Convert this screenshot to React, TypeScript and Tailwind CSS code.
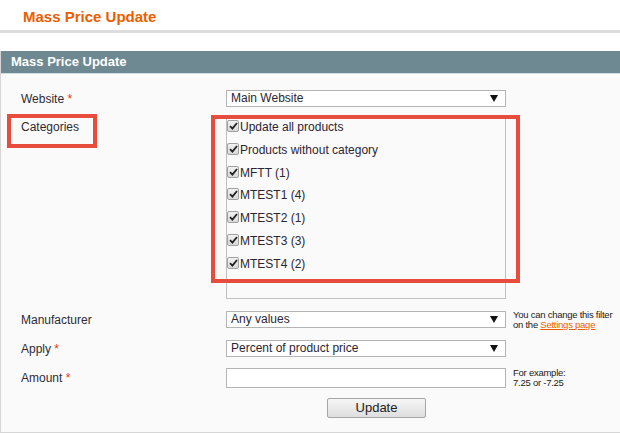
import React from 'react';

const categories = [
  'Update all products',
  'Products without category',
  'MFTT (1)',
  'MTEST1 (4)',
  'MTEST2 (1)',
  'MTEST3 (3)',
  'MTEST4 (2)',
];

function Arrow() {
  return (
    <svg width="8" height="7" viewBox="0 0 8 7" className="shrink-0">
      <path d="M0 0 L8 0 L4 7 Z" fill="#111" />
    </svg>
  );
}

function Select({ value }: { value: string }) {
  return (
    <div className="w-[280px] h-[17px] shrink-0 bg-white border border-[#b4b4b4] flex items-center justify-between pl-[4px] pr-[7px] text-[12px] text-[#2c2532]">
      <span className="leading-[15px]">{value}</span>
      <Arrow />
    </div>
  );
}

function Check() {
  return (
    <span className="mt-[3px] w-[12px] h-[12px] rounded-[2px] border border-[#a0a0a0] bg-gradient-to-b from-[#f2f2f2] to-[#d9d9d9] flex items-center justify-center shrink-0">
      <svg width="9" height="8" viewBox="0 0 9 8">
        <path d="M1 4.2 L3.4 6.6 L8 1" stroke="#222" strokeWidth="1.8" fill="none" />
      </svg>
    </span>
  );
}

function Label({ text, req }: { text: string; req?: boolean }) {
  return (
    <div className="w-[225px] pl-[20px] shrink-0 text-[12px] text-[#2f2b33]">
      {text}
      {req && <span className="text-[#eb340a]"> *</span>}
    </div>
  );
}

function Help({ children }: { children: React.ReactNode }) {
  return (
    <div className="ml-[7px] whitespace-nowrap text-[9.5px] leading-[10px] tracking-[-0.25px] text-[#222]">
      {children}
    </div>
  );
}

export default function App() {
  return (
    <div className="relative w-full h-[433px] bg-white overflow-hidden" style={{ fontFamily: '"Liberation Sans", Arial, sans-serif' }}>
      <div className="h-[30px] pl-[23px] pt-[8px]">
        <h1 className="text-[15px] leading-[17px] font-bold text-[#eb5e00]">Mass Price Update</h1>
      </div>
      <div className="h-[3px] bg-[#dddddd]" />
      <div className="mt-[18px] border-l border-b border-[#d6d6d6] h-[382px] flex flex-col">
        <div className="h-[22px] bg-[#6f8992] text-white font-bold text-[13px] leading-[22px] pl-[10px] border-b border-[#cfdde2] box-content">
          Mass Price Update
        </div>
        <div className="flex-1 bg-[#fafafa] pt-[16px]">
          <div className="flex items-center h-[17px]">
            <Label text="Website" req />
            <Select value="Main Website" />
          </div>

          <div className="flex mt-[9px]">
            <div className="w-[225px] pl-[20px] shrink-0 pt-[4px] text-[12px] leading-[14px] text-[#2f2b33]">Categories</div>
            <div className="w-[280px] h-[183px] border border-[#c0c0c0] bg-[#fafafa] flex flex-col">
              {categories.map((c) => (
                <div key={c} className="h-[22.8px] flex items-start gap-[1px] text-[12px] text-[#2c2532]">
                  <Check />
                  <span className="leading-[21px]">{c}</span>
                </div>
              ))}
            </div>
          </div>

          <div className="flex items-center h-[17px] mt-[12px]">
            <Label text="Manufacturer" />
            <Select value="Any values" />
            <Help>
              You can change this filter
              <br />
              on the <span className="text-[#eb5e00] underline">Settings page</span>
            </Help>
          </div>

          <div className="flex items-center h-[17px] mt-[12px]">
            <Label text="Apply" req />
            <Select value="Percent of product price" />
          </div>

          <div className="flex items-center h-[20px] mt-[11px]">
            <Label text="Amount" req />
            <div className="w-[280px] h-[20px] shrink-0 bg-white border border-[#b4b4b4]" />
            <Help>
              For example:
              <br />
              7.25 or -7.25
            </Help>
          </div>

          <div className="flex mt-[10px] pl-[326px]">
            <button className="w-[99px] h-[20px] rounded-[2px] border border-[#a6a6a6] bg-gradient-to-b from-[#f6f6f6] to-[#dedede] text-[13px] leading-[18px] text-[#222]">
              Update
            </button>
          </div>
        </div>
      </div>

      <div className="absolute left-[7px] top-[114px] w-[90px] h-[34px] border-[4px] border-[#e74c3c]" />
      <div className="absolute left-[211px] top-[115px] w-[309px] h-[168px] border-[4px] border-[#e74c3c]" />
    </div>
  );
}
